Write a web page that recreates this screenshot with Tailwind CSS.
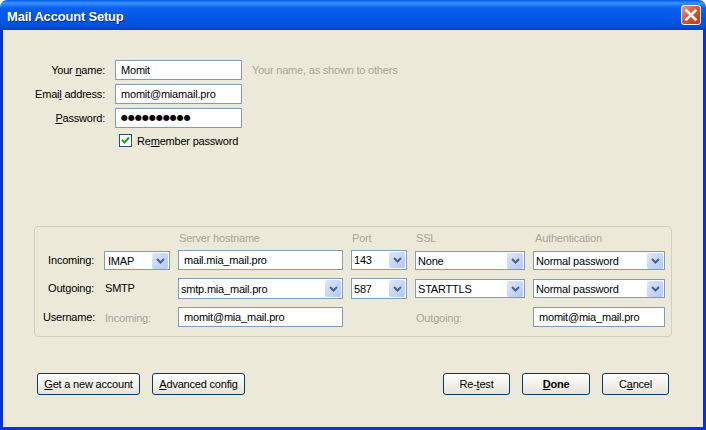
<!DOCTYPE html>
<html lang="en">
<head>
    <meta charset="UTF-8">
    <title>Mail Account Setup</title>
    <script src="https://cdn.jsdelivr.net/npm/@tailwindcss/browser@4"></script>
</head>
<body class="bg-white overflow-hidden">
    <div class="w-[706px] h-[430px] flex flex-col font-['Liberation_Sans',sans-serif] text-[11px] leading-[15px] text-black tracking-[-0.2px]">

        <!-- Title bar -->
        <div class="h-[30px] shrink-0 rounded-t-[7px] flex items-center justify-between pl-[7px] pr-[5px] bg-[linear-gradient(180deg,#0058e6_0,#3a93ff_3px,#0a5fef_8px,#0055e5_20px,#0052dc_26px,#0040b8_30px)]">
            <span class="pt-[2px] text-white font-bold text-[13px] tracking-[-0.2px] [text-shadow:1px_1px_0_#0a2a8a]">Mail Account Setup</span>
            <div class="w-[20px] h-[20px] rounded-[3px] border border-white bg-gradient-to-br from-[#e89a80] via-[#d9502c] to-[#c03a18] flex items-center justify-center">
                <svg width="14" height="14" viewBox="0 0 14 14"><path d="M2.5 2.5l9 9M11.5 2.5l-9 9" stroke="#fff" stroke-width="2.6" stroke-linecap="square"/></svg>
            </div>
        </div>

        <!-- Dialog body -->
        <div class="flex-1 flex flex-col bg-[#ece9d8] border-x-[3px] border-b-[3px] border-[#0831d9]">

            <!-- Account fields -->
            <div class="mt-[30px] ml-[22px] grid grid-cols-[80px_127px_auto] gap-x-[10px] gap-y-[4px] items-center justify-start">
                <label class="text-right whitespace-nowrap">Your <u>n</u>ame:</label>
                <div class="h-[20px] bg-white border border-[#7f9db9] pl-[5px] leading-[18px]">Momit</div>
                <span class="text-[#a7a69c]">Your name, as shown to others</span>

                <label class="text-right whitespace-nowrap">Emai<u>l</u> address:</label>
                <div class="h-[20px] bg-white border border-[#7f9db9] pl-[5px] leading-[18px]">momit@miamail.pro</div>
                <span></span>

                <label class="text-right whitespace-nowrap"><u>P</u>assword:</label>
                <div class="h-[20px] bg-white border border-[#7f9db9] pl-[5px] leading-[18px] font-['DejaVu_Sans',sans-serif] text-[8px] tracking-[0px]">●●●●●●●●●●</div>
                <span></span>
            </div>

            <div class="mt-[6px] ml-[116px] flex items-center gap-[5px] h-[13px]">
                <div class="w-[13px] h-[13px] bg-white border border-[#1c5180] flex items-center justify-center">
                    <svg width="9" height="9" viewBox="0 0 9 9"><path d="M1 4l2.5 2.5L8 1.5" fill="none" stroke="#21a121" stroke-width="2"/></svg>
                </div>
                <span class="pt-[2px]">Re<u>m</u>ember password</span>
            </div>

            <!-- Server settings group -->
            <div class="mt-[79px] ml-[31px] w-[638px] h-[111px] border border-[#d0d0bf] rounded-[4px] pt-[3px] pl-[8px] grid grid-cols-[53px_66px_165px_56px_110px_132px] grid-rows-[12px_20px_21px_20px] gap-x-[8px] gap-y-[8px] items-center">
                <span></span>
                <span></span>
                <span class="text-[#a7a69c] pl-[1px] pt-[4px]">Server hostname</span>
                <span class="text-[#a7a69c] pl-[1px] pt-[4px]">Port</span>
                <span class="text-[#a7a69c] pl-[1px] pt-[4px]">SSL</span>
                <span class="text-[#a7a69c] pl-[2px] pt-[4px]">Authentication</span>

                <span class="text-right pr-[2px]">Incoming:</span>
                <div class="h-[19px] mt-[1px] bg-white border border-[#7f9db9] flex items-center justify-between pl-[3px] pr-[1px]">
                    <span class="pt-[1px]">IMAP</span>
                    <div class="w-[16px] h-[16px] rounded-[2px] bg-gradient-to-br from-[#dde6fb] to-[#b3c8f5] flex items-center justify-center"><svg width="9" height="6" viewBox="0 0 9 6"><path d="M1 1l3.5 3.5L8 1" fill="none" stroke="#4d6185" stroke-width="2"/></svg></div>
                </div>
                <div class="h-[20px] bg-white border border-[#7f9db9] pl-[5px] leading-[19px]">mail.mia_mail.pro</div>
                <div class="h-[20px] bg-white border border-[#7f9db9] flex items-center justify-between pl-[2px] pr-[1px]">
                    <span class="pt-[1px]">143</span>
                    <div class="w-[16px] h-[16px] rounded-[2px] bg-gradient-to-br from-[#dde6fb] to-[#b3c8f5] flex items-center justify-center"><svg width="9" height="6" viewBox="0 0 9 6"><path d="M1 1l3.5 3.5L8 1" fill="none" stroke="#4d6185" stroke-width="2"/></svg></div>
                </div>
                <div class="h-[19px] mt-[1px] bg-white border border-[#7f9db9] flex items-center justify-between pl-[2px] pr-[1px]">
                    <span class="pt-[1px]">None</span>
                    <div class="w-[16px] h-[16px] rounded-[2px] bg-gradient-to-br from-[#dde6fb] to-[#b3c8f5] flex items-center justify-center"><svg width="9" height="6" viewBox="0 0 9 6"><path d="M1 1l3.5 3.5L8 1" fill="none" stroke="#4d6185" stroke-width="2"/></svg></div>
                </div>
                <div class="h-[19px] mt-[1px] bg-white border border-[#7f9db9] flex items-center justify-between pl-[2px] pr-[1px]">
                    <span class="pt-[1px]">Normal password</span>
                    <div class="w-[16px] h-[16px] rounded-[2px] bg-gradient-to-br from-[#dde6fb] to-[#b3c8f5] flex items-center justify-center"><svg width="9" height="6" viewBox="0 0 9 6"><path d="M1 1l3.5 3.5L8 1" fill="none" stroke="#4d6185" stroke-width="2"/></svg></div>
                </div>

                <span class="text-right pr-[2px]">Outgoing:</span>
                <span class="pl-[1px]">SMTP</span>
                <div class="h-[21px] bg-white border border-[#7f9db9] flex items-center justify-between pl-[2px] pr-[1px]">
                    <span class="pt-[1px]">smtp.mia_mail.pro</span>
                    <div class="w-[16px] h-[17px] rounded-[2px] bg-gradient-to-br from-[#dde6fb] to-[#b3c8f5] flex items-center justify-center"><svg width="9" height="6" viewBox="0 0 9 6"><path d="M1 1l3.5 3.5L8 1" fill="none" stroke="#4d6185" stroke-width="2"/></svg></div>
                </div>
                <div class="h-[21px] bg-white border border-[#7f9db9] flex items-center justify-between pl-[2px] pr-[1px]">
                    <span class="pt-[1px]">587</span>
                    <div class="w-[16px] h-[17px] rounded-[2px] bg-gradient-to-br from-[#dde6fb] to-[#b3c8f5] flex items-center justify-center"><svg width="9" height="6" viewBox="0 0 9 6"><path d="M1 1l3.5 3.5L8 1" fill="none" stroke="#4d6185" stroke-width="2"/></svg></div>
                </div>
                <div class="h-[19px] bg-white border border-[#7f9db9] flex items-center justify-between pl-[2px] pr-[1px]">
                    <span class="pt-[1px]">STARTTLS</span>
                    <div class="w-[16px] h-[16px] rounded-[2px] bg-gradient-to-br from-[#dde6fb] to-[#b3c8f5] flex items-center justify-center"><svg width="9" height="6" viewBox="0 0 9 6"><path d="M1 1l3.5 3.5L8 1" fill="none" stroke="#4d6185" stroke-width="2"/></svg></div>
                </div>
                <div class="h-[19px] bg-white border border-[#7f9db9] flex items-center justify-between pl-[2px] pr-[1px]">
                    <span class="pt-[1px]">Normal password</span>
                    <div class="w-[16px] h-[16px] rounded-[2px] bg-gradient-to-br from-[#dde6fb] to-[#b3c8f5] flex items-center justify-center"><svg width="9" height="6" viewBox="0 0 9 6"><path d="M1 1l3.5 3.5L8 1" fill="none" stroke="#4d6185" stroke-width="2"/></svg></div>
                </div>

                <span class="text-right pr-[2px]">Username:</span>
                <span class="text-[#a7a69c] pl-[1px] pt-[2px]">Incoming:</span>
                <div class="h-[20px] bg-white border border-[#7f9db9] pl-[5px] leading-[18px]">momit@mia_mail.pro</div>
                <span></span>
                <span class="text-[#a7a69c] pl-[1px] pt-[2px]">Outgoing:</span>
                <div class="h-[20px] bg-white border border-[#7f9db9] pl-[5px] leading-[18px]">momit@mia_mail.pro</div>
            </div>

            <!-- Buttons -->
            <div class="mt-[36px] pl-[34px] pr-[34px] flex items-center">
                <button class="w-[103px] h-[22px] rounded-[3px] border border-[#003c74] bg-gradient-to-b from-white to-[#e6e3d6] mr-[12px]"><u>G</u>et a new account</button>
                <button class="w-[93px] h-[22px] rounded-[3px] border border-[#003c74] bg-gradient-to-b from-white to-[#e6e3d6]"><u>A</u>dvanced config</button>
                <div class="flex-1"></div>
                <button class="w-[67px] h-[22px] rounded-[3px] border border-[#003c74] bg-gradient-to-b from-white to-[#e6e3d6] mr-[12px]">Re-<u>t</u>est</button>
                <button class="w-[68px] h-[22px] rounded-[3px] border border-[#003c74] bg-gradient-to-b from-white to-[#e6e3d6] mr-[12px] font-bold"><u>D</u>one</button>
                <button class="w-[67px] h-[22px] rounded-[3px] border border-[#003c74] bg-gradient-to-b from-white to-[#e6e3d6]">C<u>a</u>ncel</button>
            </div>
        </div>
    </div>
</body>
</html>
